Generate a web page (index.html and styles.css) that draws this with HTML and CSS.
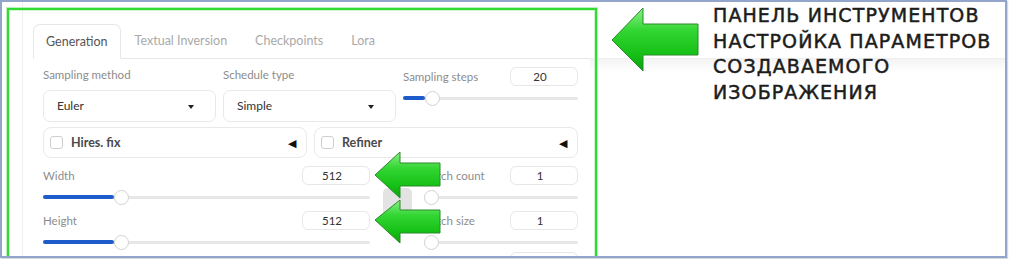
FILE: index.html
```html
<!DOCTYPE html>
<html lang="ru">
<head>
<meta charset="utf-8">
<title>Панель инструментов</title>
<link rel="stylesheet" href="styles.css">
</head>
<body>
<div class="frame">
  <div class="shot">
    <section class="ui">
      <nav class="tabs">
        <span class="tab active">Generation</span>
        <span class="tab">Textual Inversion</span>
        <span class="tab">Checkpoints</span>
        <span class="tab">Lora</span>
      </nav>
      <div class="panel">
        <div class="row row-top">
          <div class="field">
            <span class="label">Sampling method</span>
            <div class="select">Euler<span class="caret"></span></div>
          </div>
          <div class="field">
            <span class="label">Schedule type</span>
            <div class="select">Simple<span class="caret"></span></div>
          </div>
          <div class="slider-block">
            <div class="head"><span class="label">Sampling steps</span><span class="num">20</span></div>
            <div class="range"><div class="fill" style="width:22px"></div><div class="thumb" style="left:22px"></div></div>
          </div>
        </div>
        <div class="row row-acc">
          <div class="acc"><span class="cb"></span><span class="acc-title">Hires. fix</span><span class="tri">◀</span></div>
          <div class="acc"><span class="cb"></span><span class="acc-title">Refiner</span><span class="tri">◀</span></div>
        </div>
        <div class="row row-size">
          <div class="col col-wh">
            <div class="slider-block">
              <div class="head"><span class="label">Width</span><span class="num">512</span></div>
              <div class="range"><div class="fill" style="width:71px"></div><div class="thumb" style="left:71px"></div></div>
            </div>
            <div class="slider-block">
              <div class="head"><span class="label">Height</span><span class="num">512</span></div>
              <div class="range"><div class="fill" style="width:71px"></div><div class="thumb" style="left:71px"></div></div>
            </div>
            <div class="slider-block tail">
              <div class="head"><span class="label">Distilled CFG Scale</span></div>
            </div>
          </div>
          <div class="swap"></div>
          <div class="col col-batch">
            <div class="slider-block">
              <div class="head"><span class="label">Batch count</span><span class="num">1</span></div>
              <div class="range"><div class="thumb" style="left:0px"></div></div>
            </div>
            <div class="slider-block">
              <div class="head"><span class="label">Batch size</span><span class="num">1</span></div>
              <div class="range"><div class="thumb" style="left:0px"></div></div>
            </div>
            <div class="slider-block tail-right">
              <div class="head"><span class="spacer"></span><span class="num empty"></span></div>
            </div>
          </div>
        </div>
      </div>
    </section>
    <aside class="note">
      <p class="note-text">ПАНЕЛЬ ИНСТРУМЕНТОВ<br>НАСТРОЙКА ПАРАМЕТРОВ<br>СОЗДАВАЕМОГО<br>ИЗОБРАЖЕНИЯ</p>
    </aside>
    <div class="highlight"></div>
    <svg class="arrows" width="1009" height="259" viewBox="0 0 1009 259" aria-hidden="true">
      <defs>
        <linearGradient id="g1" x1="0" y1="0" x2="0" y2="1">
          <stop offset="0" stop-color="#8af08a"/>
          <stop offset="0.35" stop-color="#33d633"/>
          <stop offset="0.75" stop-color="#14bf14"/>
          <stop offset="1" stop-color="#0f9f0f"/>
        </linearGradient>
      </defs>
      <path d="M612,40 L643,8 L643,24 L698,24 L698,55 L643,55 L643,71 Z" fill="url(#g1)" stroke="#2b8a2b" stroke-width="1"/>
      <path d="M375,175 L400,152 L400,163 L440,163 L440,186 L400,186 L400,198 Z" fill="url(#g1)" stroke="#2b8a2b" stroke-width="1"/>
      <path d="M375,220 L400,200 L400,210 L440,210 L440,233 L400,233 L400,243 Z" fill="url(#g1)" stroke="#2b8a2b" stroke-width="1"/>
    </svg>
  </div>
</div>
</body>
</html>
```
FILE: styles.css
```css
* { box-sizing: border-box; }
html, body { margin: 0; padding: 0; background: #fff; }
body { width: 1009px; height: 259px; overflow: hidden; font-family: Lato, "Liberation Sans", sans-serif; }

.frame {
  width: 1007px;
  height: 258px;
  border: 2px solid #93a5cb;
  box-shadow: 1px 1px 1px rgba(90, 100, 130, 0.25);
  background: #fff;
}
.shot {
  position: relative;
  display: flex;
  height: 100%;
  overflow: hidden;
}

/* ---------- webui panel ---------- */
.ui {
  flex: none;
  width: 568px;
  margin-left: 20px;
  border-left: 1px solid #efefef;
  padding: 22px 0 0 10px;
}
.tabs {
  display: flex;
  height: 35px;
  border-bottom: 1px solid #e7e7e7;
}
.tab {
  padding: 0 14px;
  line-height: 34px;
  font-size: 12.5px;
  color: #a9a9a9;
  white-space: nowrap;
}
.tab.active {
  padding: 0 12px;
  color: #555;
  border: 1px solid #e7e7e7;
  border-bottom-color: #fff;
  border-radius: 7px 7px 0 0;
  height: 35px;
  line-height: 33px;
  background: #fff;
}
.panel {
  width: 557px;
  padding: 8px 12px 0 10px;
}
.row { display: grid; }
.row-top { grid-template-columns: 173px 173px 175px; column-gap: 7px; }
.row-acc { grid-template-columns: 264px 264px; column-gap: 7px; margin-top: 5px; }
.row-size { display: flex; margin-top: 8px; align-items: flex-start; }

.label {
  font-size: 11.5px;
  line-height: 16px;
  color: #8c8c8c;
  white-space: nowrap;
}
.field { display: flex; flex-direction: column; gap: 7px; }
.select {
  position: relative;
  height: 32px;
  border: 1px solid #e9e9e9;
  border-radius: 7px;
  padding-left: 13px;
  font-size: 12px;
  line-height: 30px;
  color: #333;
}
.caret {
  position: absolute;
  right: 21px;
  top: 14px;
  border-left: 3.5px solid transparent;
  border-right: 3.5px solid transparent;
  border-top: 4px solid #222;
}

.slider-block { display: flex; flex-direction: column; gap: 5px; }
.head {
  display: flex;
  justify-content: space-between;
  align-items: center;
  height: 19px;
}
.num {
  width: 68px;
  height: 19px;
  border: 1px solid #e7e7e7;
  border-radius: 6px;
  font-size: 11.5px;
  line-height: 17px;
  color: #333;
  text-align: center;
  padding-right: 8px;
}
.range {
  position: relative;
  height: 14px;
}
.range::before {
  content: "";
  position: absolute;
  left: 0; right: 0; top: 6px;
  height: 3px;
  border-radius: 2px;
  background: #e7e7e7;
}
.fill {
  position: absolute;
  left: 0; top: 5px;
  height: 4px;
  border-radius: 2px;
  background: #1e5ccc;
}
.thumb {
  position: absolute;
  top: 0;
  width: 15px;
  height: 15px;
  border-radius: 50%;
  background: #fff;
  border: 1px solid #d2d2d2;
}
.tail { margin-top: -4px; }
.tail .label { color: #a8a8a8; }
.tail-right { margin-top: -4px; }

.acc {
  display: flex;
  align-items: center;
  height: 31px;
  border: 1px solid #e9e9e9;
  border-radius: 8px;
  padding: 0 10px 0 6px;
}
.cb {
  width: 13px;
  height: 13px;
  border: 1px solid #cfcfcf;
  border-radius: 3px;
  background: #fff;
}
.acc-title {
  margin-left: 8px;
  font-size: 12.5px;
  font-weight: 700;
  color: #4a4a4a;
  flex: 1;
}
.tri { font-size: 11px; color: #111; }

.col { display: flex; flex-direction: column; gap: 7px; }
.col-wh { width: 327px; }
.col-batch { width: 154px; margin-left: 12px; }
.swap {
  width: 29px;
  height: 30px;
  margin: 22px 0 0 13px;
  border-radius: 5px;
  background: #e3e3e3;
}

/* ---------- annotation ---------- */
.note {
  flex: 1;
  padding: 1px 0 0 123px;
  background: linear-gradient(to bottom, #fff 56px, #e9e9e9 56px, #f4f4f4 57px, #fff 70px);
}
.note-text {
  margin: 0;
  font-family: "DejaVu Sans", sans-serif;
  font-weight: 400;
  font-size: 19px;
  letter-spacing: 1.1px;
  line-height: 25.5px;
  color: #1c1c1c;
  -webkit-text-stroke: 0.5px #1c1c1c;
  white-space: nowrap;
}
.highlight {
  position: absolute;
  left: 5px;
  top: 6px;
  width: 590px;
  height: 270px;
  border: 2px solid #33da33;
  box-shadow: 0 0 0 1px rgba(140, 235, 140, 0.6), inset 0 0 0 1px rgba(170, 240, 170, 0.6);
  pointer-events: none;
}
.arrows {
  position: absolute;
  left: -2px;
  top: -2px;
  pointer-events: none;
}
```
